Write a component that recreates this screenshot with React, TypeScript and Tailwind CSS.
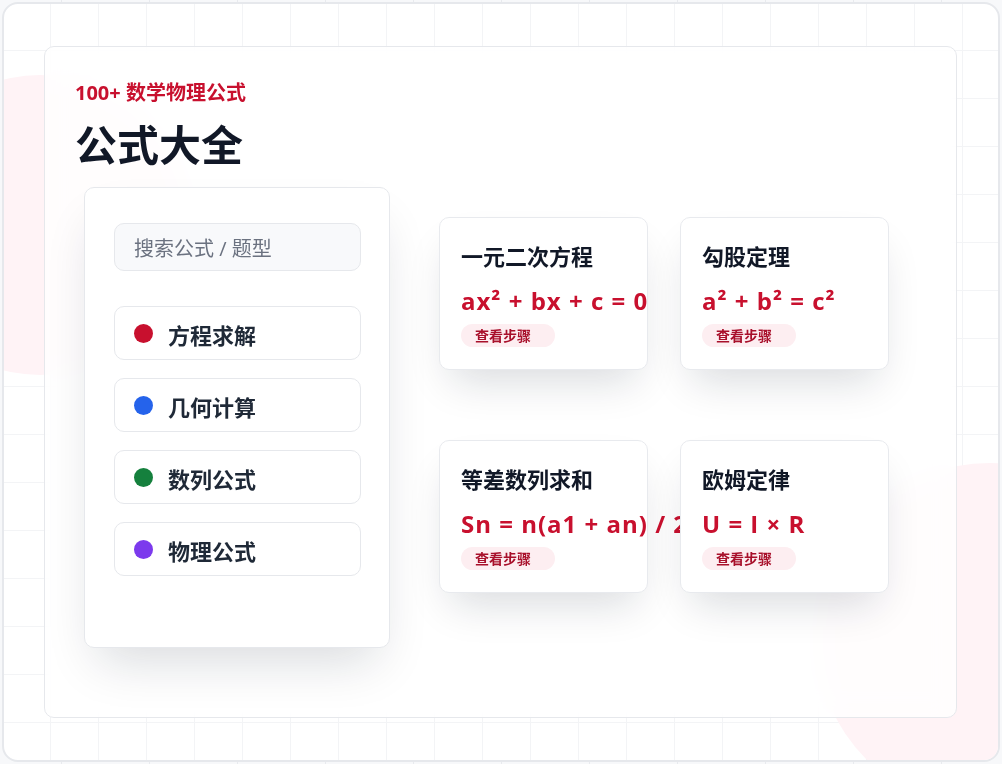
const categories = [
  { name: "方程求解", dot: "bg-[#c8102e]" },
  { name: "几何计算", dot: "bg-[#2563eb]" },
  { name: "数列公式", dot: "bg-[#15803d]" },
  { name: "物理公式", dot: "bg-[#7c3aed]" },
];

const formulas = [
  { title: "一元二次方程", expr: "ax² + bx + c = 0" },
  { title: "勾股定理", expr: "a² + b² = c²" },
  { title: "等差数列求和", expr: "Sn = n(a1 + an) / 2" },
  { title: "欧姆定律", expr: "U = I × R" },
];

function FormulaCard({ title, expr }: { title: string; expr: string }) {
  return (
    <div className="h-[153px] w-[209px] rounded-[10px] border border-[#e8eaee] bg-white px-[21px] pt-[23px] shadow-[0_22px_40px_-12px_rgba(15,23,42,0.16)]">
      <div className="text-[22px] font-bold leading-[30px] text-[#111827]">{title}</div>
      <div className="mt-[15px] whitespace-nowrap text-[24px] font-bold leading-[30px] tracking-[1px] text-[#c8102e]">
        {expr}
      </div>
      <div className="mt-[8px] flex h-[23px] w-[94px] items-center rounded-full bg-[#fdeef1] pl-[14px] text-[14px] font-bold text-[#a8102b]">
        查看步骤
      </div>
    </div>
  );
}

export default function App() {
  return (
    <div
      className="h-[764px] w-[1002px] overflow-hidden bg-[#f7f8fa] bg-[linear-gradient(to_right,#e8eaee_1px,transparent_1px)] bg-[size:88px_88px] bg-[position:61px_0px] p-[2px]"
      style={{ fontFamily: '"Open Sans", "Noto Sans CJK SC", sans-serif' }}
    >
      <div className="relative h-[760px] w-[998px] overflow-hidden rounded-[16px] border-2 border-[#e6e8ec] bg-white">
        {/* background grid + blobs */}
        <div className="absolute inset-0 bg-[linear-gradient(to_right,#f3f4f6_1px,transparent_1px),linear-gradient(to_bottom,#f3f4f6_1px,transparent_1px)] bg-[size:48px_48px] bg-[position:46px_46px]" />
        <div className="absolute left-[-114px] top-[71px] h-[300px] w-[300px] rounded-full bg-[#fff3f6]" />
        <div className="absolute left-[812px] top-[459px] h-[348px] w-[348px] rounded-full bg-[#fff3f6]" />

        <div className="relative pl-[40px] pt-[42px]">
          <div className="h-[672px] w-[913px] rounded-[10px] border border-[#e6e8ec] bg-white/80 pl-[30px] pt-[32px] backdrop-blur-md">
            <div className="text-[20px] font-bold leading-[28px] text-[#c8102e]">100+ 数学物理公式</div>
            <h1 className="mt-[12px] text-[42px] font-bold leading-[52px] text-[#111827]">公式大全</h1>

            <div className="ml-[9px] mt-[16px] flex">
              <div className="h-[461px] w-[306px] rounded-[10px] border border-[#e6e8ec] bg-white pl-[29px] pt-[35px] shadow-[0_26px_48px_-14px_rgba(15,23,42,0.16)]">
                <div className="flex h-[48px] w-[247px] items-center rounded-[10px] border border-[#e6e8ec] bg-[#f8f9fb] pl-[19px] pt-[4px] text-[20px] text-[#6b7280]">
                  搜索公式 / 题型
                </div>
                <div className="mt-[35px] flex flex-col gap-[18px]">
                  {categories.map((c) => (
                    <div
                      key={c.name}
                      className="flex h-[54px] w-[247px] items-center gap-[15px] rounded-[10px] border border-[#e6e8ec] bg-white pl-[19px]"
                    >
                      <span className={`h-[19px] w-[19px] rounded-full ${c.dot}`} />
                      <span className="pt-[3px] text-[22px] font-bold leading-[30px] text-[#1f2937]">{c.name}</span>
                    </div>
                  ))}
                </div>
              </div>

              <div className="ml-[49px] mt-[30px] grid grid-cols-[209px_209px] content-start gap-x-[32px] gap-y-[70px]">
                {formulas.map((f) => (
                  <FormulaCard key={f.title} title={f.title} expr={f.expr} />
                ))}
              </div>
            </div>
          </div>
        </div>
      </div>
    </div>
  );
}
